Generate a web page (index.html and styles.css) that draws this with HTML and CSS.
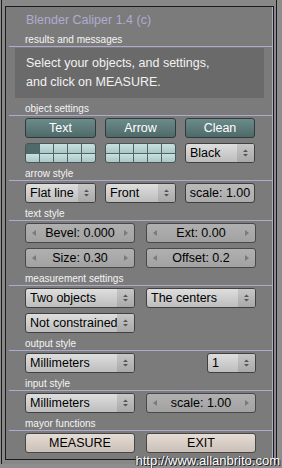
FILE: index.html
```html
<!DOCTYPE html>
<html lang="en">
<head>
  <meta charset="UTF-8" />
  <title>Blender Caliper</title>
  <link rel="stylesheet" href="styles.css">
</head>
<body>
  <div class="window">
    <div class="frame">
      <div class="panel">
        <div class="title">Blender Caliper 1.4 (c)</div>

        <div class="label">results and messages</div>
        <div class="sep"></div>
        <div class="message">
          Select your objects, and settings,<br>
          and click on MEASURE.
        </div>

        <div class="label">object settings</div>
        <div class="sep"></div>
        <div class="rows">
          <div class="cols3">
            <button class="btn teal">Text</button>
            <button class="btn teal">Arrow</button>
            <button class="btn teal">Clean</button>
          </div>
          <div class="cols3">
            <div class="palette">
              <span class="cell on"></span><span class="cell"></span><span class="cell"></span><span class="cell"></span><span class="cell"></span>
              <span class="cell"></span><span class="cell"></span><span class="cell"></span><span class="cell"></span><span class="cell"></span>
            </div>
            <div class="palette">
              <span class="cell"></span><span class="cell"></span><span class="cell"></span><span class="cell"></span><span class="cell"></span>
              <span class="cell"></span><span class="cell"></span><span class="cell"></span><span class="cell"></span><span class="cell"></span>
            </div>
            <div class="menu"><span class="menu-text">Black</span><span class="menu-arrow"><svg width="7" height="8" viewBox="0 0 7 8"><path d="M1 3 L3.5 0.5 L6 3 Z M1 5 L3.5 7.5 L6 5 Z" fill="#555"/></svg></span></div>
          </div>
        </div>

        <div class="label">arrow style</div>
        <div class="sep"></div>
        <div class="rows">
          <div class="cols3">
            <div class="menu"><span class="menu-text">Flat line</span><span class="menu-arrow"><svg width="7" height="8" viewBox="0 0 7 8"><path d="M1 3 L3.5 0.5 L6 3 Z M1 5 L3.5 7.5 L6 5 Z" fill="#555"/></svg></span></div>
            <div class="menu"><span class="menu-text">Front</span><span class="menu-arrow"><svg width="7" height="8" viewBox="0 0 7 8"><path d="M1 3 L3.5 0.5 L6 3 Z M1 5 L3.5 7.5 L6 5 Z" fill="#555"/></svg></span></div>
            <div class="num plain">scale: 1.00</div>
          </div>
        </div>

        <div class="label">text style</div>
        <div class="sep"></div>
        <div class="rows">
          <div class="cols2">
            <div class="num"><span class="tri left"></span>Bevel: 0.000<span class="tri right"></span></div>
            <div class="num"><span class="tri left"></span>Ext: 0.00<span class="tri right"></span></div>
          </div>
          <div class="cols2">
            <div class="num"><span class="tri left"></span>Size: 0.30<span class="tri right"></span></div>
            <div class="num"><span class="tri left"></span>Offset: 0.2<span class="tri right"></span></div>
          </div>
        </div>

        <div class="label">measurement settings</div>
        <div class="sep"></div>
        <div class="rows">
          <div class="cols2">
            <div class="menu"><span class="menu-text">Two objects</span><span class="menu-arrow"><svg width="7" height="8" viewBox="0 0 7 8"><path d="M1 3 L3.5 0.5 L6 3 Z M1 5 L3.5 7.5 L6 5 Z" fill="#555"/></svg></span></div>
            <div class="menu"><span class="menu-text">The centers</span><span class="menu-arrow"><svg width="7" height="8" viewBox="0 0 7 8"><path d="M1 3 L3.5 0.5 L6 3 Z M1 5 L3.5 7.5 L6 5 Z" fill="#555"/></svg></span></div>
          </div>
          <div class="cols2">
            <div class="menu"><span class="menu-text">Not constrained</span><span class="menu-arrow"><svg width="7" height="8" viewBox="0 0 7 8"><path d="M1 3 L3.5 0.5 L6 3 Z M1 5 L3.5 7.5 L6 5 Z" fill="#555"/></svg></span></div>
          </div>
        </div>

        <div class="label">output style</div>
        <div class="sep"></div>
        <div class="rows">
          <div class="cols2">
            <div class="menu"><span class="menu-text">Millimeters</span><span class="menu-arrow"><svg width="7" height="8" viewBox="0 0 7 8"><path d="M1 3 L3.5 0.5 L6 3 Z M1 5 L3.5 7.5 L6 5 Z" fill="#555"/></svg></span></div>
            <div class="right-cell">
              <div class="menu small"><span class="menu-text">1</span><span class="menu-arrow"><svg width="7" height="8" viewBox="0 0 7 8"><path d="M1 3 L3.5 0.5 L6 3 Z M1 5 L3.5 7.5 L6 5 Z" fill="#555"/></svg></span></div>
            </div>
          </div>
        </div>

        <div class="label">input style</div>
        <div class="sep"></div>
        <div class="rows">
          <div class="cols2">
            <div class="menu"><span class="menu-text">Millimeters</span><span class="menu-arrow"><svg width="7" height="8" viewBox="0 0 7 8"><path d="M1 3 L3.5 0.5 L6 3 Z M1 5 L3.5 7.5 L6 5 Z" fill="#555"/></svg></span></div>
            <div class="num"><span class="tri left"></span>scale: 1.00<span class="tri right"></span></div>
          </div>
        </div>

        <div class="label">mayor functions</div>
        <div class="sep"></div>
        <div class="rows">
          <div class="cols2">
            <button class="btn beige">MEASURE</button>
            <button class="btn beige">EXIT</button>
          </div>
        </div>
      </div>
    </div>
  </div>
  <div class="watermark">http://www.allanbrito.com</div>
</body>
</html>
```

FILE: styles.css
```css
* { box-sizing: border-box; }
html, body {
  margin: 0;
  padding: 0;
}
body {
  width: 282px;
  height: 468px;
  overflow: hidden;
  position: relative;
  background: #8d8d8d;
  font-family: "Liberation Sans", Arial, sans-serif;
}

.window {
  width: 276px;
  margin-left: 1px;
  border-left: 1px solid #1c1c1c;
  border-right: 1px solid #1c1c1c;
  padding: 6px 2px 4px 3px;
  background: #888;
}
.frame {
  border: 1px solid #1c1c1c;
}
.panel {
  background: #7b7b7b;
  border-right: 1px solid #aeaacb;
  padding: 0 15px 6px 19px;
}

.title {
  height: 26px;
  line-height: 26px;
  font-size: 12.5px;
  color: #afabd2;
  padding-left: 1px;
}
.label {
  height: 13px;
  line-height: 13px;
  font-size: 10px;
  color: #f4f4f4;
  margin-top: 4px;
}
.title + .label {
  margin-top: 0;
}
.sep {
  height: 1px;
  background: #aeaacb;
  margin: 0 -15px 2px -16px;
}
.message {
  background: #6a6a6a;
  height: 50px;
  margin: -1px -7px 0 -10px;
  padding: 6px 0 0 11px;
  font-size: 12.5px;
  line-height: 19px;
  color: #f2f2f2;
}

.rows {
  display: grid;
  gap: 5px;
}
.cols3 {
  display: grid;
  grid-template-columns: 71px 71px 70px;
  gap: 9px;
  margin-right: -1px;
}
.cols2 {
  display: grid;
  grid-template-columns: 110px 110px;
  gap: 11px;
}
.right-cell {
  display: flex;
  justify-content: flex-end;
}

.btn {
  height: 20px;
  border: 1px solid #3a3a3a;
  border-radius: 3px;
  font-family: inherit;
  font-size: 12.5px;
  padding: 0;
}
.teal {
  color: #fff;
  background: linear-gradient(#6d8b8b, #4e6969);
  border-color: #2f3b3b;
}
.beige {
  color: #000;
  background: linear-gradient(#e5dcd5, #cbc0b7);
  border-color: #474747;
}

.palette {
  height: 20px;
  display: grid;
  grid-template-columns: repeat(5, 1fr);
  grid-template-rows: 1fr 1fr;
  gap: 1px;
  background: #566363;
  border: 1px solid #4a5656;
  border-radius: 3px;
  overflow: hidden;
}
.cell {
  background: linear-gradient(#c9e0e0, #aac7c7);
}
.cell.on {
  background: #4e6a6a;
}

.menu {
  height: 20px;
  display: flex;
  border: 1px solid #404040;
  border-radius: 3px;
  overflow: hidden;
  font-size: 12.5px;
  background: linear-gradient(#dedede, #bdbdbd);
}
.menu.small {
  width: 49px;
}
.menu-text {
  flex: 1;
  padding-left: 4px;
  line-height: 18px;
  white-space: nowrap;
  overflow: hidden;
}
.menu-arrow {
  width: 17px;
  display: flex;
  align-items: center;
  justify-content: center;
  background: linear-gradient(#c6c6c6, #a9a9a9);
}

.num {
  height: 20px;
  position: relative;
  border: 1px solid #484848;
  border-radius: 3px;
  background: linear-gradient(#b0b0b0, #a2a2a2);
  font-size: 12.5px;
  line-height: 18px;
  text-align: center;
}
.num.plain {
  background: linear-gradient(#bababa, #acacac);
  border-color: #3e3e3e;
}
.tri {
  position: absolute;
  top: 6px;
  width: 0;
  height: 0;
  border-top: 3.5px solid transparent;
  border-bottom: 3.5px solid transparent;
}
.tri.left {
  left: 6px;
  border-right: 4px solid #7a7a7a;
}
.tri.right {
  right: 6px;
  border-left: 4px solid #7a7a7a;
}

.watermark {
  position: absolute;
  right: 2px;
  top: 453px;
  font-size: 13px;
  color: #fff;
  text-shadow: 1px 1px 0 #222, -1px 0 0 #444;
}
```
